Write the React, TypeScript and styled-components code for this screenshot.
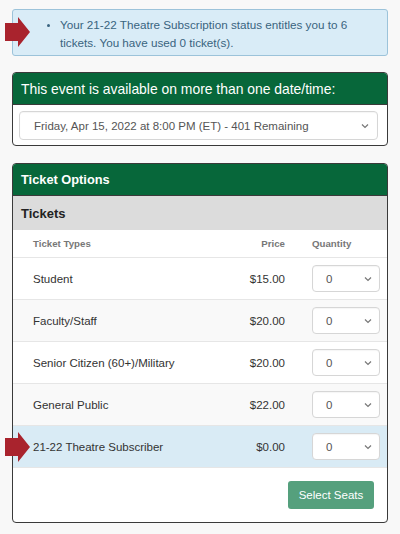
import React from "react";
import styled, { createGlobalStyle } from "styled-components";

const Global = createGlobalStyle`
  html, body { margin: 0; padding: 0; background: #f8f8f8; }
  body { font-family: "Liberation Sans", Arial, sans-serif; }
  * { box-sizing: border-box; }
`;

const Page = styled.div`
  position: relative;
  width: 400px;
  height: 534px;
  padding: 9px 12px 0 12px;
  display: flex;
  flex-direction: column;
`;

const Alert = styled.div`
  background: #d9ecf7;
  border: 1px solid #9cc3da;
  border-radius: 3px;
  height: 47px;
  padding: 6px 10px 0 0;
  color: #3a6480;
  font-size: 11.7px;
  line-height: 18px;
  margin-bottom: 16px;
`;

const AlertList = styled.ul`
  margin: 0;
  padding-left: 47px;
  max-width: 345px;
  li::marker { font-size: 10px; }
`;

const Panel = styled.div<{ $grow?: boolean }>`
  background: #fff;
  border: 1px solid #3a3a3a;
  border-radius: 4px;
  overflow: hidden;
  margin-bottom: ${(p) => (p.$grow ? "0" : "17px")};
`;

const PanelHeading = styled.div<{ $bold?: boolean }>`
  background: #07673a;
  color: #fff;
  height: 32px;
  display: flex;
  align-items: center;
  padding-left: 8px;
  font-size: ${(p) => (p.$bold ? "12.8px" : "13.9px")};
  font-weight: ${(p) => (p.$bold ? 700 : 400)};
  border-bottom: 1px solid #3a3a3a;
`;

const EventBody = styled.div`
  padding: 6px 9px 5px 6px;
`;

const SelectBox = styled.div<{ $wide?: boolean }>`
  display: flex;
  align-items: center;
  justify-content: space-between;
  background: #fff;
  border: 1px solid #d6d6d6;
  border-radius: 4px;
  height: ${(p) => (p.$wide ? "29px" : "27px")};
  width: ${(p) => (p.$wide ? "100%" : "68px")};
  padding: ${(p) => (p.$wide ? "0 8px 0 14px" : "0 7px 0 13px")};
  color: #555;
  font-size: 11.5px;
  box-shadow: inset 0 1px 1px rgba(0, 0, 0, 0.04);
`;

const Chevron = () => (
  <svg width="8" height="6" viewBox="0 0 8 6" fill="none">
    <path d="M1 1.5 L4 4.5 L7 1.5" stroke="#777" strokeWidth="1.2" />
  </svg>
);

const SubHeading = styled.div`
  background: #dcdcdc;
  height: 34px;
  display: flex;
  align-items: center;
  padding-left: 8px;
  font-size: 13px;
  font-weight: 700;
  color: #222;
`;

const Row = styled.div<{ $tone?: "white" | "stripe" | "info"; $head?: boolean }>`
  display: grid;
  grid-template-columns: 1fr auto 68px;
  column-gap: 27px;
  align-items: center;
  height: ${(p) => (p.$head ? "27px" : "42px")};
  padding: 0 7px 0 20px;
  border-top: ${(p) => (p.$head ? "none" : "1px solid #e6e6e6")};
  background: ${(p) =>
    p.$tone === "info" ? "#d9ebf5" : p.$tone === "stripe" ? "#f9f9f9" : "#fff"};
  font-size: ${(p) => (p.$head ? "9.7px" : "11.5px")};
  font-weight: ${(p) => (p.$head ? 700 : 400)};
  color: ${(p) => (p.$head ? "#777" : "#333")};
`;

const Price = styled.div`
  text-align: right;
`;

const Footer = styled.div`
  display: flex;
  justify-content: flex-end;
  padding: 13px 13px 13px 0;
  border-top: 1px solid #e6e6e6;
`;

const Button = styled.button`
  background: #55a07d;
  color: #fff;
  border: none;
  border-radius: 3px;
  height: 28px;
  width: 86px;
  font-family: inherit;
  font-size: 11.5px;
`;

const Arrow = styled.svg<{ $top: number }>`
  position: absolute;
  left: 5px;
  top: ${(p) => p.$top}px;
`;

const ArrowMark = ({ top }: { top: number }) => (
  <Arrow $top={top} width="25" height="30" viewBox="0 0 25 30">
    <path d="M0 6 H13 V0 L25 15 L13 30 V24 H0 Z" fill="#a9232d" />
  </Arrow>
);

const tickets = [
  { name: "Student", price: "$15.00", tone: "white" as const },
  { name: "Faculty/Staff", price: "$20.00", tone: "stripe" as const },
  { name: "Senior Citizen (60+)/Military", price: "$20.00", tone: "white" as const },
  { name: "General Public", price: "$22.00", tone: "stripe" as const },
  { name: "21-22 Theatre Subscriber", price: "$0.00", tone: "info" as const },
];

export default function App() {
  return (
    <>
      <Global />
      <Page>
        <Alert>
          <AlertList>
            <li>
              Your 21-22 Theatre Subscription status entitles you to 6 tickets. You have used 0
              ticket(s).
            </li>
          </AlertList>
        </Alert>
        <Panel>
          <PanelHeading>This event is available on more than one date/time:</PanelHeading>
          <EventBody>
            <SelectBox $wide>
              <span>Friday, Apr 15, 2022 at 8:00 PM (ET) - 401 Remaining</span>
              <Chevron />
            </SelectBox>
          </EventBody>
        </Panel>
        <Panel $grow>
          <PanelHeading $bold>Ticket Options</PanelHeading>
          <SubHeading>Tickets</SubHeading>
          <Row $head>
            <div>Ticket Types</div>
            <Price>Price</Price>
            <div>Quantity</div>
          </Row>
          {tickets.map((t) => (
            <Row key={t.name} $tone={t.tone}>
              <div>{t.name}</div>
              <Price>{t.price}</Price>
              <SelectBox>
                <span>0</span>
                <Chevron />
              </SelectBox>
            </Row>
          ))}
          <Footer>
            <Button>Select Seats</Button>
          </Footer>
        </Panel>
        <ArrowMark top={17} />
        <ArrowMark top={432} />
      </Page>
    </>
  );
}
